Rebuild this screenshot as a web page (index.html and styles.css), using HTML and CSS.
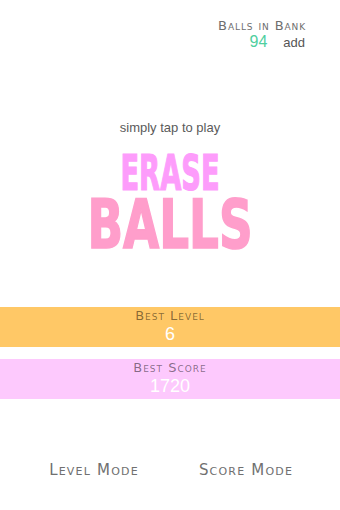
FILE: index.html
```html
<!DOCTYPE html>
<html>
<head>
<meta charset="utf-8">
<link rel="stylesheet" href="styles.css">
</head>
<body>
<div class="screen">
  <header class="bank">
    <div class="bank-title">Balls in Bank</div>
    <div class="bank-row"><span class="bank-count">94</span><span class="bank-add">add</span></div>
  </header>
  <div class="tagline">simply tap to play</div>
  <div class="logo">
    <div class="logo-line logo-erase"><span>ERASE</span></div>
    <div class="logo-line logo-balls"><span>BALLS</span></div>
  </div>
  <section class="band band-level">
    <div class="band-label">Best Level</div>
    <div class="band-value">6</div>
  </section>
  <section class="band band-score">
    <div class="band-label">Best Score</div>
    <div class="band-value">1720</div>
  </section>
  <nav class="modes">
    <div class="mode">Level Mode</div>
    <div class="mode">Score Mode</div>
  </nav>
</div>
</body>
</html>
```
FILE: styles.css
```css
html, body {
  margin: 0;
  padding: 0;
  background: #ffffff;
}
.screen {
  width: 340px;
  height: 510px;
  overflow: hidden;
  font-family: "Liberation Sans", Arial, sans-serif;
  display: flex;
  flex-direction: column;
}
.bank {
  padding: 18.5px 35px 0 0;
  display: flex;
  flex-direction: column;
  align-items: flex-end;
}
.bank-title {
  font-family: "DejaVu Sans", sans-serif;
  font-size: 13px;
  line-height: 14px;
  font-variant: small-caps;
  letter-spacing: 0.9px;
  margin-right: -1px;
  color: #6e6e6e;
}
.bank-row {
  line-height: 17px;
  display: flex;
  align-items: baseline;
}
.bank-count {
  font-size: 16px;
  color: #4fcf9f;
}
.bank-add {
  font-size: 13px;
  color: #555555;
  margin-left: 16px;
}
.tagline {
  margin-top: 69px;
  font-size: 13px;
  line-height: 16px;
  color: #5a5a5a;
  text-align: center;
}
.logo {
  margin-top: 13px;
  display: flex;
  flex-direction: column;
  align-items: center;
  font-family: "Liberation Sans Narrow", "DejaVu Sans Condensed", sans-serif;
  font-weight: 700;
}
.logo-line span {
  display: inline-block;
}
.logo-erase {
  font-size: 49px;
  line-height: 49px;
  color: #fd9cfb;
  -webkit-text-stroke: 1.2px #fd9cfb;
}
.logo-erase span {
  transform: scaleX(0.62);
}
.logo-balls {
  font-size: 68px;
  line-height: 54px;
  color: #ff9ecb;
  -webkit-text-stroke: 1.6px #ff9ecb;
}
.logo-balls span {
  transform: scaleX(0.765);
}
.band {
  padding: 2px 0;
  text-align: center;
}
.band-level {
  margin-top: 55px;
  background: #ffc866;
}
.band-score {
  margin-top: 12px;
  background: #fdc9fd;
}
.band-label {
  font-family: "DejaVu Sans", sans-serif;
  font-size: 13px;
  line-height: 14px;
  font-variant: small-caps;
  letter-spacing: 1px;
  color: rgba(0, 0, 0, 0.48);
}
.band-value {
  font-size: 18px;
  line-height: 22px;
  color: #ffffff;
}
.modes {
  margin-top: 62px;
  padding: 0 18px;
  display: grid;
  grid-template-columns: 1fr 1fr;
}
.mode {
  text-align: center;
  font-family: "DejaVu Sans", sans-serif;
  font-size: 15px;
  line-height: 18px;
  font-variant: small-caps;
  letter-spacing: 1.2px;
  color: #707070;
}
```
